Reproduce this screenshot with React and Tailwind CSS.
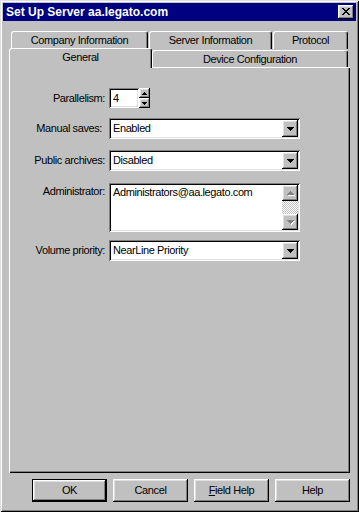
const RAISED = "shadow-[inset_-1px_-1px_#000,inset_1px_1px_#fff,inset_-2px_-2px_#808080,inset_2px_2px_#dfdfdf]";
const SUNKEN = "shadow-[inset_1px_1px_#808080,inset_-1px_-1px_#fff,inset_2px_2px_#000,inset_-2px_-2px_#dfdfdf]";

const X_PATTERN = [
  "xx....xx",
  ".xx..xx.",
  "..xxxx..",
  "...xx...",
  "..xxxx..",
  ".xx..xx.",
  "xx....xx",
];

function CloseGlyph() {
  return (
    <svg width="8" height="7" viewBox="0 0 8 7" shapeRendering="crispEdges">
      {X_PATTERN.map((row, y) =>
        row.split("").map((c, x) =>
          c === "x" ? <rect key={`${x}-${y}`} x={x} y={y} width="1" height="1" fill="#000" /> : null
        )
      )}
    </svg>
  );
}

function DownArrow({ w = 7, color = "#000" }) {
  const h = Math.ceil(w / 2);
  return (
    <svg width={w} height={h} viewBox={`0 0 ${w} ${h}`} shapeRendering="crispEdges">
      {Array.from({ length: h }).map((_, i) => (
        <rect key={i} x={i} y={i} width={w - 2 * i} height="1" fill={color} />
      ))}
    </svg>
  );
}

function UpArrow({ w = 7, color = "#000" }) {
  const h = Math.ceil(w / 2);
  return (
    <svg width={w} height={h} viewBox={`0 0 ${w} ${h}`} shapeRendering="crispEdges">
      {Array.from({ length: h }).map((_, i) => (
        <rect key={i} x={h - 1 - i} y={i} width={w - 2 * (h - 1 - i)} height="1" fill={color} />
      ))}
    </svg>
  );
}

function Combo({ value }) {
  return (
    <div className={`w-[191px] h-[21px] bg-white ${SUNKEN} flex items-center p-[2px]`}>
      <span className="flex-1 pl-[2px] leading-none">{value}</span>
      <div className={`w-[16px] h-[17px] bg-[#c0c0c0] ${RAISED} flex items-center justify-center`}>
        <DownArrow w={7} />
      </div>
    </div>
  );
}

function Tab({ className, children }) {
  return (
    <div
      className={`border-t border-l border-r border-white border-r-black rounded-tl-[3px] rounded-tr-[3px] shadow-[inset_-1px_0_#808080] flex items-center justify-center leading-none bg-[#c0c0c0] ${className}`}
    >
      {children}
    </div>
  );
}

function Button({ children, isDefault }) {
  return (
    <div
      className={`w-[75px] h-[23px] bg-[#c0c0c0] flex items-center justify-center leading-none ${
        isDefault ? "border border-black" : ""
      }`}
    >
      <div className={`w-full h-full ${RAISED} flex items-center justify-center`}>{children}</div>
    </div>
  );
}

export default function App() {
  return (
    <div
      className={`w-[359px] h-[512px] bg-[#c0c0c0] p-[3px] flex flex-col text-[11px] text-black font-['Liberation_Sans',Arial,sans-serif] shadow-[inset_1px_1px_#dfdfdf,inset_-1px_-1px_#000,inset_2px_2px_#fff,inset_-2px_-2px_#808080] select-none`}
    >
      {/* Title bar */}
      <div className="h-[18px] bg-[#000080] flex items-center pl-[3px] pr-[2px]">
        <span className="text-white font-bold text-[12px] leading-none">Set Up Server aa.legato.com</span>
        <div className={`ml-auto w-[16px] h-[14px] bg-[#c0c0c0] ${RAISED} flex items-center justify-center pb-[1px]`}>
          <CloseGlyph />
        </div>
      </div>

      {/* Tabs + panel */}
      <div className="ml-[6px] mt-[10px] w-[341px] flex flex-col tracking-[-0.4px]">
        <div className="flex pl-[2px] gap-[1px] h-[18px]">
          <Tab className="w-[137px] h-[18px]">Company Information</Tab>
          <Tab className="w-[123px] h-[18px]">Server Information</Tab>
          <Tab className="w-[75px] h-[18px]">Protocol</Tab>
        </div>
        <div className="flex h-[20px] mt-[-1px] relative z-10">
          <Tab className="w-[143px] h-[20px] pb-[3px]">General</Tab>
          <Tab className="w-[196px] h-[17px] mt-[2px]">Device Configuration</Tab>
        </div>
        <div className="h-[406px] mt-[-1px] bg-[#c0c0c0] shadow-[inset_1px_1px_#fff,inset_-1px_-1px_#000,inset_-2px_-2px_#808080] flex flex-col pt-[21px]">
          {/* Parallelism */}
          <div className="flex items-center h-[20px]">
            <div className="w-[97px] text-right pr-[1px] leading-none">Parallelism:</div>
            <div className="ml-[3px] flex">
              <div className={`w-[30px] h-[20px] bg-white ${SUNKEN} flex items-center pl-[4px] leading-none`}>4</div>
              <div className="flex flex-col">
                <div className={`w-[11px] h-[10px] bg-[#c0c0c0] ${RAISED} flex items-center justify-center`}>
                  <UpArrow w={5} />
                </div>
                <div className={`w-[11px] h-[10px] bg-[#c0c0c0] ${RAISED} flex items-center justify-center`}>
                  <DownArrow w={5} />
                </div>
              </div>
            </div>
          </div>

          {/* Manual saves */}
          <div className="flex items-center h-[21px] mt-[10px]">
            <div className="w-[97px] text-right pr-[4px] leading-none">Manual saves:</div>
            <div className="ml-[3px]">
              <Combo value="Enabled" />
            </div>
          </div>

          {/* Public archives */}
          <div className="flex items-center h-[21px] mt-[11px]">
            <div className="w-[97px] text-right pr-[1px] leading-none">Public archives:</div>
            <div className="ml-[3px]">
              <Combo value="Disabled" />
            </div>
          </div>

          {/* Administrator */}
          <div className="flex items-start h-[49px] mt-[12px]">
            <div className="w-[97px] text-right pr-[1px] leading-none pt-[3px]">Administrator:</div>
            <div className={`ml-[3px] w-[191px] h-[49px] bg-white ${SUNKEN} flex p-[2px]`}>
              <div className="flex-1 pl-[2px] pt-[2px] leading-none">Administrators@aa.legato.com</div>
              <div className="w-[16px] flex flex-col">
                <div className={`h-[16px] bg-[#c0c0c0] ${RAISED} flex items-center justify-center`}>
                  <div className="relative">
                    <div className="absolute left-[1px] top-[1px]">
                      <UpArrow w={7} color="#fff" />
                    </div>
                    <div className="relative">
                      <UpArrow w={7} color="#808080" />
                    </div>
                  </div>
                </div>
                <div className="flex-1 bg-[repeating-conic-gradient(#c0c0c0_0_25%,#fff_0_50%)] bg-[length:2px_2px]" />
                <div className={`h-[16px] bg-[#c0c0c0] ${RAISED} flex items-center justify-center`}>
                  <div className="relative">
                    <div className="absolute left-[1px] top-[1px]">
                      <DownArrow w={7} color="#fff" />
                    </div>
                    <div className="relative">
                      <DownArrow w={7} color="#808080" />
                    </div>
                  </div>
                </div>
              </div>
            </div>
          </div>

          {/* Volume priority */}
          <div className="flex items-center h-[21px] mt-[8px]">
            <div className="w-[97px] text-right pr-[1px] leading-none">Volume priority:</div>
            <div className="ml-[3px]">
              <Combo value="NearLine Priority" />
            </div>
          </div>
        </div>

        {/* Buttons */}
        <div className="flex justify-end gap-[6px] mt-[6px]">
          <Button isDefault>OK</Button>
          <Button>Cancel</Button>
          <Button>
            <span>
              <span className="underline">F</span>ield Help
            </span>
          </Button>
          <Button>Help</Button>
        </div>
      </div>
    </div>
  );
}
